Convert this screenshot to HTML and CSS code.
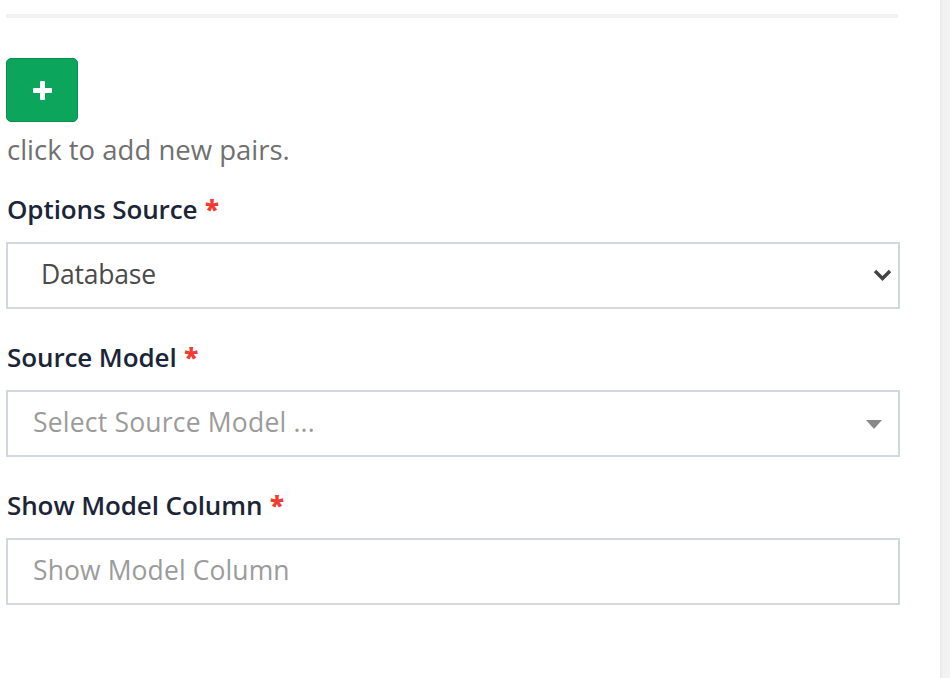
FILE: index.html
```html
<!DOCTYPE html>
<html>
<head>
<meta charset="utf-8">
<link rel="stylesheet" href="styles.css">
</head>
<body>
<div class="page">
  <main class="content">
    <div class="divider"></div>
    <button class="add-btn" type="button" aria-label="add">
      <svg width="19" height="19" viewBox="0 0 19 19"><rect x="7" y="0" width="5" height="19" rx="1" fill="#fff"/><rect x="0" y="7" width="19" height="5" rx="1" fill="#fff"/></svg>
    </button>
    <p class="help">click to add new pairs.</p>

    <div class="group first">
      <label class="label">Options Source <span class="req">*</span></label>
      <div class="control">
        <select class="field select-native"><option>Database</option></select>
        <svg class="chev" width="19" height="13" viewBox="0 0 19 13"><polyline points="2,2 9.5,9.5 17,2" fill="none" stroke="#444" stroke-width="3.4"/></svg>
      </div>
    </div>

    <div class="group">
      <label class="label">Source Model <span class="req">*</span></label>
      <div class="control">
        <div class="field placeholder">Select Source Model ...</div>
        <svg class="caret" width="16" height="9" viewBox="0 0 16 9"><polygon points="0,0 16,0 8,9" fill="#888"/></svg>
      </div>
    </div>

    <div class="group">
      <label class="label">Show Model Column <span class="req">*</span></label>
      <div class="control">
        <input class="field input" placeholder="Show Model Column">
      </div>
    </div>
  </main>
  <aside class="rail"></aside>
</div>
</body>
</html>
```

FILE: styles.css
```css
* { box-sizing: border-box; }
html, body { margin: 0; padding: 0; background: #fff; }
body { font-family: "Open Sans", "Lato", sans-serif; }
.page { display: flex; width: 950px; height: 678px; overflow: hidden; }
.content { width: 940px; padding: 14px 0 0 6px; }
.rail {
  width: 10px;
  background: linear-gradient(to right, #e6e7e9 0, #f1f1f2 3px, #f3f3f4 100%);
}
.divider { width: 892px; height: 4px; background: #f2f2f2; }
.add-btn {
  display: flex; align-items: center; justify-content: center;
  margin-top: 40px;
  width: 72px; height: 64px; padding: 0;
  background: #0ba55b; border: 1px solid #0a8f4e; border-radius: 5px;
}
.help {
  margin: 10px 0 0 1px;
  font-size: 27.5px; line-height: 36px; color: #707070;
}
.group { margin-top: 31px; width: 894px; }
.group.first { margin-top: 24px; }
.label {
  display: block; margin: 0 0 16px 1px;
  font-size: 26px; line-height: 34px; font-weight: 600; color: #1b2537; letter-spacing: -0.1px;
}
.req { color: #f23b2f; font-weight: 800; font-size: 26px; margin-left: 1px; }
.control { position: relative; }
.field {
  display: block; width: 894px; height: 67px;
  border: 2px solid #d3d7df; background: #fff; border-radius: 0;
  font-family: inherit; font-size: 26.5px; margin: 0;
}
.select-native {
  -webkit-appearance: none; appearance: none;
  padding: 0 0 4px 33px; color: #4a4a4a; outline: none; letter-spacing: -0.2px;
}
.placeholder { display: flex; align-items: center; padding: 0 0 4px 25px; color: #9b9b9b; letter-spacing: 0.2px; }
.input { padding: 0 25px 4px; color: #444; outline: none; letter-spacing: 0.1px; }
.input::placeholder { color: #9b9b9b; }
.chev { position: absolute; left: 867px; top: 27px; }
.caret { position: absolute; left: 860px; top: 30px; }
```
